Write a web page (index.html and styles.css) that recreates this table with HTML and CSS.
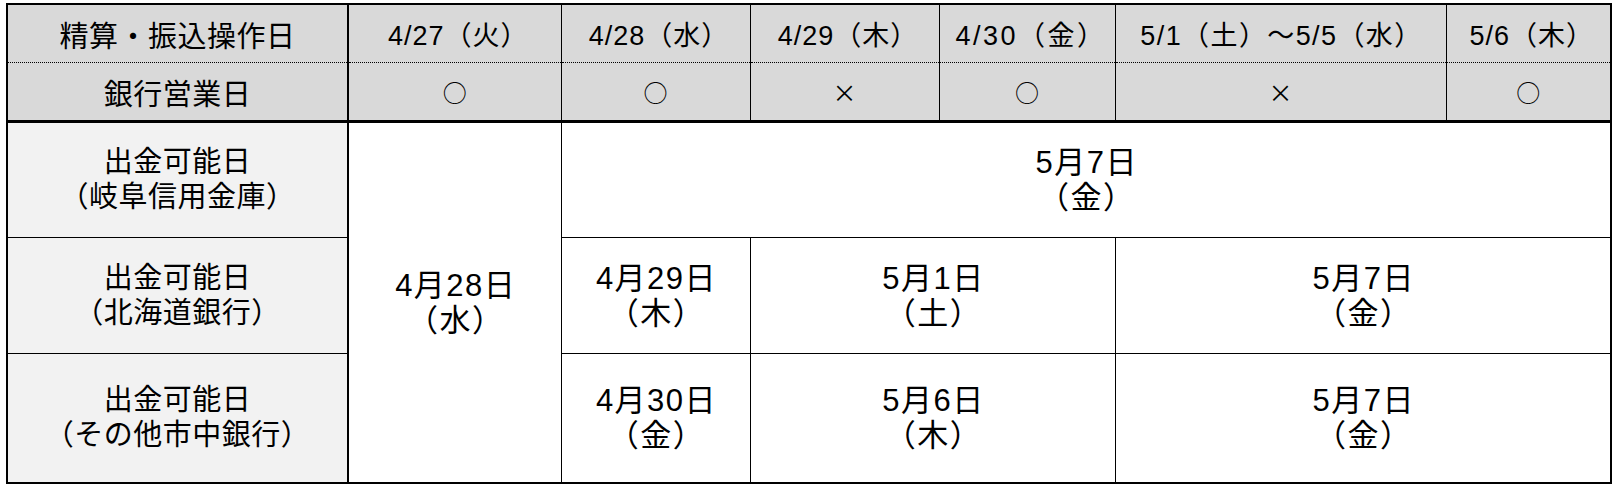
FILE: index.html
```html
<!DOCTYPE html>
<html lang="ja">
<head>
<meta charset="utf-8">
<title>出金可能日</title>
<link rel="stylesheet" href="styles.css">
</head>
<body>
<table class="schedule">
  <colgroup>
    <col class="c-label">
    <col class="c-d1">
    <col class="c-d2">
    <col class="c-d3">
    <col class="c-d4">
    <col class="c-d5">
    <col class="c-d6">
  </colgroup>
  <thead>
    <tr class="row-op">
      <th class="label">精算・振込操作日</th>
      <th class="date">4/27（火）</th>
      <th class="date">4/28（水）</th>
      <th class="date">4/29（木）</th>
      <th class="date spaced">4/30（金）</th>
      <th class="date range">5/1（土）～5/5（水）</th>
      <th class="date">5/6（木）</th>
    </tr>
    <tr class="row-bank">
      <th class="label">銀行営業日</th>
      <td class="mark">○</td>
      <td class="mark">○</td>
      <td class="mark">×</td>
      <td class="mark">○</td>
      <td class="mark">×</td>
      <td class="mark">○</td>
    </tr>
  </thead>
  <tbody>
    <tr class="row-1">
      <th class="side">出金可能日<br>（岐阜信用金庫）</th>
      <td class="day first" rowspan="3">4月28日<br>（水）</td>
      <td class="day" colspan="5">5月7日<br>（金）</td>
    </tr>
    <tr class="row-2">
      <th class="side">出金可能日<br>（北海道銀行）</th>
      <td class="day">4月29日<br>（木）</td>
      <td class="day" colspan="2">5月1日<br>（土）</td>
      <td class="day" colspan="2">5月7日<br>（金）</td>
    </tr>
    <tr class="row-3">
      <th class="side">出金可能日<br>（その他市中銀行）</th>
      <td class="day">4月30日<br>（金）</td>
      <td class="day" colspan="2">5月6日<br>（木）</td>
      <td class="day" colspan="2">5月7日<br>（金）</td>
    </tr>
  </tbody>
</table>
</body>
</html>
```

FILE: styles.css
```css
html, body {
  margin: 0;
  padding: 0;
  background: #ffffff;
}

body {
  padding: 3px 0 0 6px;
  font-family: "Liberation Sans", "Noto Sans CJK JP", sans-serif;
  color: #000000;
}

.schedule {
  border-collapse: collapse;
  table-layout: fixed;
  width: 1606px;
  border: 2px solid #000;
}

.c-label { width: 341px; }
.c-d1 { width: 213px; }
.c-d2 { width: 189px; }
.c-d3 { width: 189px; }
.c-d4 { width: 176px; }
.c-d5 { width: 331px; }
.c-d6 { width: 165px; }

.schedule th,
.schedule td {
  padding: 0;
  text-align: center;
  vertical-align: middle;
  font-weight: normal;
  border: 1px solid #000;
}

.schedule thead th,
.schedule thead td {
  background: #d9d9d9;
}

.row-op th {
  height: 57px;
  border-bottom: 1px dotted #000;
}

.row-bank th,
.row-bank td {
  height: 57px;
  border-top: 1px dotted #000;
  border-bottom: 3px solid #000;
}

.label {
  font-size: 29px;
  letter-spacing: 0.5px;
  border-right: 2px solid #000 !important;
}

.date {
  font-size: 27px;
  letter-spacing: 1px;
  padding-left: 7px !important;
}

.date.spaced {
  letter-spacing: 2.5px;
  padding-left: 8px !important;
}

.date.range {
  letter-spacing: 1.4px;
  padding-left: 2px !important;
}

.mark {
  font-family: "Noto Sans CJK JP", sans-serif;
  font-size: 24px;
}

.side {
  background: #f2f2f2;
  font-size: 29px;
  line-height: 35px;
  letter-spacing: 0.5px;
  border-right: 2px solid #000 !important;
}

.day {
  font-size: 31px;
  line-height: 35px;
  letter-spacing: 1.5px;
  padding-left: 2px !important;
  background: #ffffff;
}

.row-1 th,
.row-1 td {
  height: 114px;
}

.row-2 th,
.row-2 td {
  height: 115px;
}

.row-3 th,
.row-3 td {
  height: 128px;
}
```
